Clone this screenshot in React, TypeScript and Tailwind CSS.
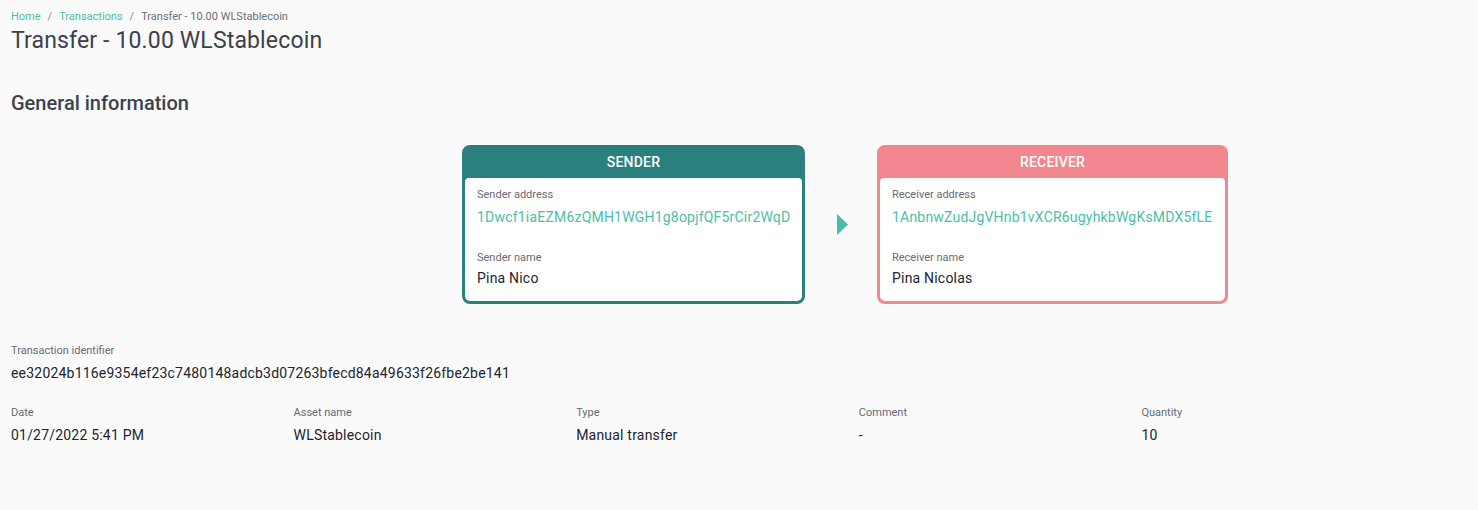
import React from "react";

type Party = {
  title: string;
  addressLabel: string;
  address: string;
  nameLabel: string;
  name: string;
  color: "teal" | "pink";
  width: string;
};

const parties: Party[] = [
  {
    title: "SENDER",
    addressLabel: "Sender address",
    address: "1Dwcf1iaEZM6zQMH1WGH1g8opjfQF5rCir2WqD",
    nameLabel: "Sender name",
    name: "Pina Nico",
    color: "teal",
    width: "w-[343px]",
  },
  {
    title: "RECEIVER",
    addressLabel: "Receiver address",
    address: "1AnbnwZudJgVHnb1vXCR6ugyhkbWgKsMDX5fLE",
    nameLabel: "Receiver name",
    name: "Pina Nicolas",
    color: "pink",
    width: "w-[351px]",
  },
];

const details = [
  { label: "Date", value: "01/27/2022 5:41 PM" },
  { label: "Asset name", value: "WLStablecoin" },
  { label: "Type", value: "Manual transfer" },
  { label: "Comment", value: "-" },
  { label: "Quantity", value: "10" },
];

function PartyCard({ party }: { party: Party }) {
  const border = party.color === "teal" ? "border-[#2b807e] bg-[#2b807e]" : "border-[#f2878f] bg-[#f2878f]";
  return (
    <div className={`${party.width} rounded-[8px] border-[3px] ${border} overflow-hidden`}>
      <div className="flex h-[30px] items-center justify-center pb-[2px] text-[14px] font-medium tracking-[0.2px] text-white">
        {party.title}
      </div>
      <div className="rounded-[4px] bg-white px-[12px] pb-[13px] pt-[10px]">
        <div className="text-[11px] leading-[14px] text-[#666a73]">{party.addressLabel}</div>
        <div className="mt-[5px] whitespace-nowrap text-[14px] leading-[20px] tracking-[0.2px] text-[#4bbfa8]">
          {party.address}
        </div>
        <div className="mt-[24px] text-[11px] leading-[14px] text-[#666a73]">{party.nameLabel}</div>
        <div className="mt-[3px] text-[14px] leading-[20px] tracking-[0.2px] text-[#22252b]">{party.name}</div>
      </div>
    </div>
  );
}

export default function App() {
  return (
    <div className="min-h-[510px] bg-[#fafafa] px-[11px] pt-[10px] font-['Roboto',sans-serif]">
      <nav className="flex items-center gap-[7px] text-[11px] leading-[14px]">
        <span className="text-[#4bbfa8]">Home</span>
        <span className="text-[#888c94]">/</span>
        <span className="text-[#4bbfa8]">Transactions</span>
        <span className="text-[#888c94]">/</span>
        <span className="text-[#6b6f78]">Transfer - 10.00 WLStablecoin</span>
      </nav>
      <h1 className="mt-[2px] text-[23px] leading-[30px] tracking-[0.15px] text-[#3c404b]">
        Transfer - 10.00 WLStablecoin
      </h1>

      <h2 className="mt-[34px] text-[20px] font-medium leading-[26px] text-[#3c424e]">General information</h2>

      <div className="mt-[29px] flex items-center pl-[451px]">
        <PartyCard party={parties[0]} />
        <svg width="11" height="21" viewBox="0 0 11 21" className="ml-[32px] mr-[29px]">
          <polygon points="0,0 11,10.5 0,21" fill="#45bfa8" />
        </svg>
        <PartyCard party={parties[1]} />
      </div>

      <div className="mt-[40px]">
        <div className="text-[11px] leading-[14px] text-[#666a73]">Transaction identifier</div>
        <div className="mt-[5px] text-[14px] leading-[20px] tracking-[0.2px] text-[#22252b]">
          ee32024b116e9354ef23c7480148adcb3d07263bfecd84a49633f26fbe2be141
        </div>
      </div>

      <div className="mt-[23px] grid w-[1413px] grid-cols-5">
        {details.map((d) => (
          <div key={d.label}>
            <div className="text-[11px] leading-[14px] text-[#666a73]">{d.label}</div>
            <div className="mt-[5px] text-[14px] leading-[20px] tracking-[0.2px] text-[#22252b]">{d.value}</div>
          </div>
        ))}
      </div>
    </div>
  );
}
